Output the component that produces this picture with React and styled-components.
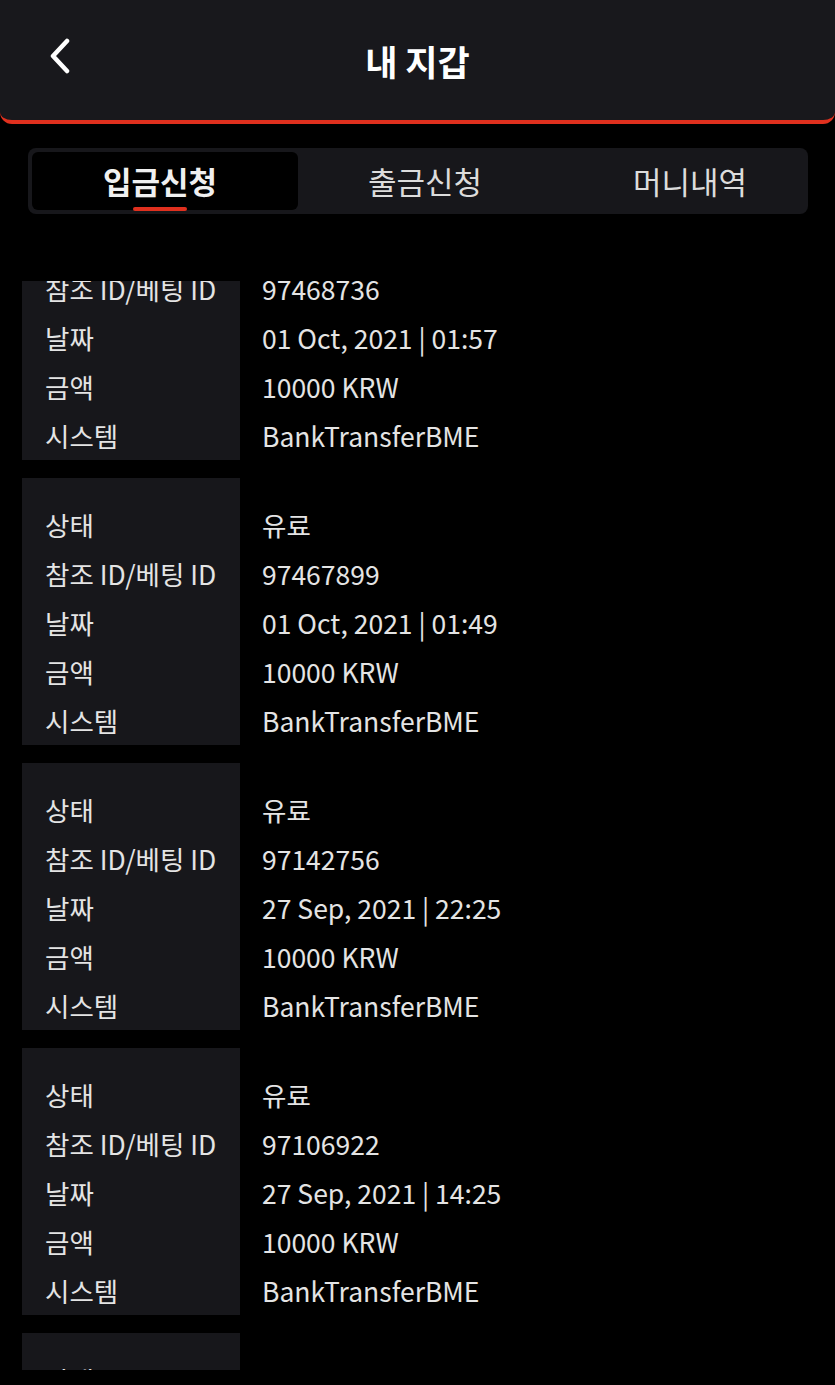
import React from 'react'
import styled, { createGlobalStyle } from 'styled-components'

const GlobalStyle = createGlobalStyle`
  html, body {
    margin: 0;
    padding: 0;
    background: #000;
  }
  body {
    font-family: "Noto Sans CJK KR", "Noto Sans", sans-serif;
    color: #e4e4e4;
  }
`

const records = [
  { status: '유료', ref: '97468736', date: '01 Oct, 2021 | 01:57', amount: '10000 KRW', system: 'BankTransferBME' },
  { status: '유료', ref: '97467899', date: '01 Oct, 2021 | 01:49', amount: '10000 KRW', system: 'BankTransferBME' },
  { status: '유료', ref: '97142756', date: '27 Sep, 2021 | 22:25', amount: '10000 KRW', system: 'BankTransferBME' },
  { status: '유료', ref: '97106922', date: '27 Sep, 2021 | 14:25', amount: '10000 KRW', system: 'BankTransferBME' },
  { status: '유료', ref: '97100211', date: '27 Sep, 2021 | 11:02', amount: '10000 KRW', system: 'BankTransferBME' },
]

const labels = ['상태', '참조 ID/베팅 ID', '날짜', '금액', '시스템']
const tabs = [
  { name: '입금신청', shift: -5 },
  { name: '출금신청', shift: 0 },
  { name: '머니내역', shift: 12 },
]

const App = () => (
  <Page>
    <GlobalStyle />
    <Header>
      <BackButton aria-label="back">
        <svg width="26" height="36" viewBox="0 0 26 36">
          <path d="M21 3 L7 18 L21 33" fill="none" stroke="#fff" strokeWidth="4.5" strokeLinecap="round" strokeLinejoin="round" />
        </svg>
      </BackButton>
      <Title>내 지갑</Title>
    </Header>

    <Tabs>
      {tabs.map((t, i) => (
        <Tab key={t.name} active={i === 0} shift={t.shift}>
          <TabLabel active={i === 0}>{t.name}</TabLabel>
        </Tab>
      ))}
    </Tabs>

    <ListViewport>
      <List>
        {records.map((r) => (
          <Card key={r.ref}>
            <LabelCol>
              {labels.map((l) => <Cell key={l}>{l}</Cell>)}
            </LabelCol>
            <ValueCol>
              <Cell>{r.status}</Cell>
              <Cell>{r.ref}</Cell>
              <Cell>{r.date}</Cell>
              <Cell>{r.amount}</Cell>
              <Cell>{r.system}</Cell>
            </ValueCol>
          </Card>
        ))}
      </List>
    </ListViewport>
  </Page>
)

export default App

const Page = styled.div`
  width: 835px;
  height: 1385px;
  background: #000;
  overflow: hidden;
`

const Header = styled.header`
  position: relative;
  height: 120px;
  background: #18181c;
  border-bottom: 4px solid #e0301e;
  border-radius: 0 0 12px 12px;
  display: flex;
  align-items: center;
  justify-content: center;
`

const BackButton = styled.div`
  position: absolute;
  left: 46px;
  top: 38px;
  width: 26px;
  height: 36px;
`

const Title = styled.h1`
  margin: 0;
  font-size: 35px;
  font-weight: 700;
  color: #fff;
`

const Tabs = styled.nav`
  margin: 24px 27px 0 28px;
  height: 66px;
  box-sizing: border-box;
  padding: 4px;
  background: #17171b;
  border-radius: 8px;
  display: grid;
  grid-template-columns: 266px 254px 1fr;
`

const Tab = styled.div`
  display: flex;
  align-items: center;
  justify-content: center;
  background: ${(p) => (p.active ? '#000' : 'transparent')};
  border-radius: 6px;
  padding-left: ${(p) => Math.max(p.shift, 0) * 2}px;
  padding-right: ${(p) => Math.max(-p.shift, 0) * 2}px;
`

const TabLabel = styled.span`
  position: relative;
  font-size: 31px;
  line-height: 40px;
  font-weight: ${(p) => (p.active ? 700 : 400)};
  color: ${(p) => (p.active ? '#f0f0f0' : '#dcdcdc')};

  &::after {
    content: '';
    display: ${(p) => (p.active ? 'block' : 'none')};
    position: absolute;
    left: 50%;
    bottom: -10px;
    width: 54px;
    height: 4px;
    margin-left: -27px;
    border-radius: 2px;
    background: #e0301e;
  }
`

const ListViewport = styled.div`
  margin-top: 67px;
  height: 1089px;
  overflow: hidden;
`

const List = styled.div`
  margin-top: -88px;
  padding: 0 0 0 22px;
  display: flex;
  flex-direction: column;
  gap: 18px;
`

const Card = styled.div`
  display: flex;
`

const LabelCol = styled.div`
  width: 218px;
  box-sizing: border-box;
  padding: 22px 0 0 23px;
  background: #17171b;
`

const ValueCol = styled.div`
  padding: 22px 0 0 22px;
`

const Cell = styled.div`
  height: 49px;
  line-height: 49px;
  font-size: 26.5px;
  white-space: nowrap;
`
